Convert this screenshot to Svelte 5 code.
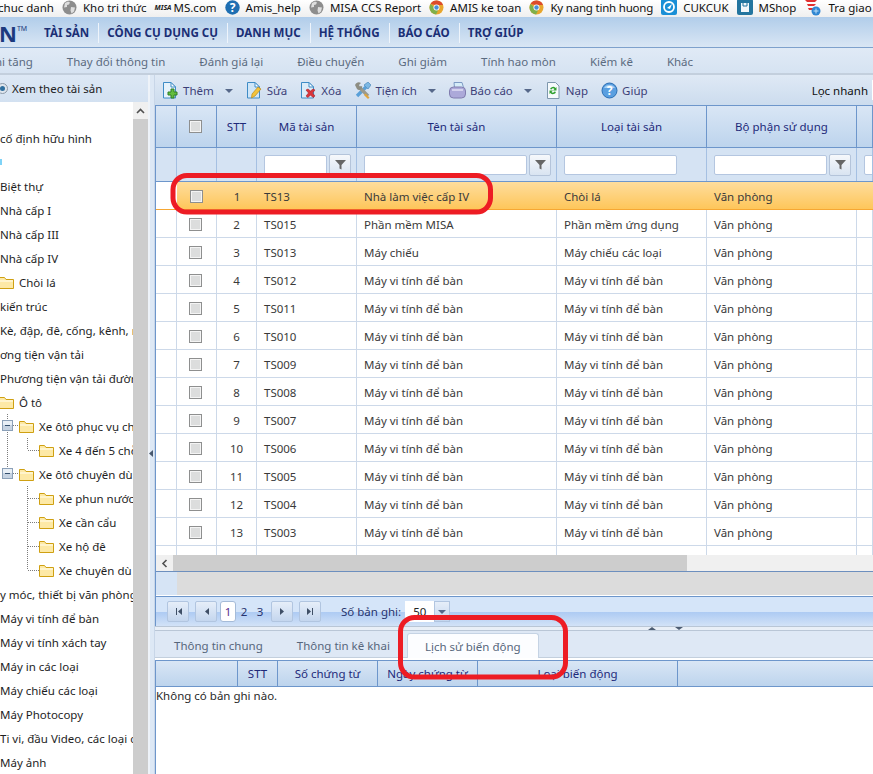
<script>
	const bookmarks = [
		{ icon: null, text: 'chuc danh' },
		{ icon: 'globe', text: 'Kho tri thức' },
		{ icon: 'misa', text: 'MS.com' },
		{ icon: 'help', text: 'Amis_help' },
		{ icon: 'globe', text: 'MISA CCS Report' },
		{ icon: 'chrome', text: 'AMIS ke toan' },
		{ icon: 'chrome', text: 'Ky nang tinh huong', tight: true },
		{ icon: 'cuk', text: 'CUKCUK' },
		{ icon: 'shop', text: 'MShop' },
		{ icon: 'tra', text: 'Tra giao d' }
	];

	const menus = ['TÀI SẢN', 'CÔNG CỤ DỤNG CỤ', 'DANH MỤC', 'HỆ THỐNG', 'BÁO CÁO', 'TRỢ GIÚP'];
	const subMenus = ['hi tăng', 'Thay đổi thông tin', 'Đánh giá lại', 'Điều chuyển', 'Ghi giảm', 'Tính hao mòn', 'Kiểm kê', 'Khác'];

	const tools = [
		{ icon: 'add', text: 'Thêm', arrow: true },
		{ icon: 'edit', text: 'Sửa' },
		{ icon: 'del', text: 'Xóa' },
		{ icon: 'tool', text: 'Tiện ích', arrow: true },
		{ icon: 'print', text: 'Báo cáo', arrow: true },
		{ icon: 'load', text: 'Nạp' },
		{ icon: 'ask', text: 'Giúp' }
	];

	// lead: the dotted connectors in front of a tree row
	const tree = [
		{ text: 'cố định hữu hình' },
		{ text: '', mark: true },
		{ text: 'Biệt thự' },
		{ text: 'Nhà cấp I' },
		{ text: 'Nhà cấp III' },
		{ text: 'Nhà cấp IV' },
		{ text: 'Chòi lá', folder: true },
		{ text: 'kiến trúc' },
		{ text: 'Kè, đập, đê, cống, kênh, r' },
		{ text: 'ơng tiện vận tải' },
		{ text: 'Phương tiện vận tải đườn' },
		{ text: 'Ô tô', folder: true },
		{ text: 'Xe ôtô phục vụ ch', folder: true, lead: 'open' },
		{ text: 'Xe 4 đến 5 chỗ', folder: true, lead: 'onlyChild' },
		{ text: 'Xe ôtô chuyên dù', folder: true, lead: 'openLast' },
		{ text: 'Xe phun nước', folder: true, lead: 'child' },
		{ text: 'Xe cần cẩu', folder: true, lead: 'child' },
		{ text: 'Xe hộ đê', folder: true, lead: 'child' },
		{ text: 'Xe chuyên dù', folder: true, lead: 'lastChild' },
		{ text: 'y móc, thiết bị văn phòng' },
		{ text: 'Máy vi tính để bàn' },
		{ text: 'Máy vi tính xách tay' },
		{ text: 'Máy in các loại' },
		{ text: 'Máy chiếu các loại' },
		{ text: 'Máy Photocopy' },
		{ text: 'Ti vi, đầu Video, các loại c' },
		{ text: 'Máy ảnh' }
	];

	const pc = 'Máy vi tính để bàn';
	const rows = [
		['1', 'TS13', 'Nhà làm việc cấp IV', 'Chòi lá'],
		['2', 'TS015', 'Phần mềm MISA', 'Phần mềm ứng dụng'],
		['3', 'TS013', 'Máy chiếu', 'Máy chiếu các loại'],
		['4', 'TS012', pc, pc],
		['5', 'TS011', pc, pc],
		['6', 'TS010', pc, pc],
		['7', 'TS009', pc, pc],
		['8', 'TS008', pc, pc],
		['9', 'TS007', pc, pc],
		['10', 'TS006', pc, pc],
		['11', 'TS005', pc, pc],
		['12', 'TS004', pc, pc],
		['13', 'TS003', pc, pc],
		['', '', '', '']
	];
</script>

{#snippet folder()}
	<svg class="folder" width="15" height="13" viewBox="0 0 15 13">
		<path d="M.5 12.500v-11h5l1.500 2h7.500v9z" fill="#fde9a6" stroke="#cfa012" />
		<path d="M1 4h13v2H1z" fill="#fff4cc" />
	</svg>
{/snippet}

{#snippet box()}
	<rect x="2.500" y="6.500" width="10" height="10" fill="#c6d3e2" stroke="#8ba0b8" />
	<rect x="3" y="7" width="9" height="4" fill="#e8eff6" />
	<path d="M5 11.500h5" stroke="#34506e" />
{/snippet}

{#snippet lead(kind)}
	{#if kind === 'open' || kind === 'openLast'}
		<svg class="lead" width="19" height="24" viewBox="0 0 19 24" shape-rendering="crispEdges">
			<path d={kind === 'open' ? 'M7.500 0v24' : 'M7.500 0v7'} class="dots" />
			<path d="M13 11.500h6" class="dots" />
			{@render box()}
		</svg>
	{:else}
		<svg class="lead" width="39" height="24" viewBox="0 0 39 24" shape-rendering="crispEdges">
			{#if kind === 'onlyChild'}<path d="M7.500 0v24" class="dots" />{/if}
			<path d={kind === 'child' ? 'M27.500 0v24' : 'M27.500 0v12'} class="dots" />
			<path d="M28 12.500h11" class="dots" />
		</svg>
	{/if}
{/snippet}

{#snippet markIcon(name)}
	{#if name === 'globe'}
		<svg width="15" height="15" viewBox="0 0 15 15">
			<circle cx="7.500" cy="7.500" r="7" fill="#8d8d8d" />
			<path d="M3 3l3-1.500 2 1-1 2-2 .5v2l-3 .5zM9 7l4 .5-1 4-2.500 2-1-3z" fill="#dedede" />
		</svg>
	{:else if name === 'misa'}
		<span class="misa">MISA</span>
	{:else if name === 'help'}
		<svg width="15" height="15" viewBox="0 0 15 15">
			<circle cx="7.500" cy="7.500" r="7.200" fill="#1f6fb2" />
			<text x="7.500" y="11.500" class="q">?</text>
		</svg>
	{:else if name === 'chrome'}
		<svg width="15" height="15" viewBox="0 0 15 15">
			<circle cx="7.500" cy="7.500" r="7" fill="#e8a62c" />
			<path d="M1.500 4A7 7 0 0 1 14 5H7z" fill="#dc4b2c" />
			<path d="M1.500 4A7 7 0 0 0 7 14.500l2-4z" fill="#7fb04a" />
			<circle cx="7.500" cy="7.500" r="3" fill="#fff" />
			<circle cx="7.500" cy="7.500" r="2.200" fill="#4a8fd8" />
		</svg>
	{:else if name === 'cuk'}
		<svg width="16" height="16" viewBox="0 0 16 16">
			<rect width="16" height="16" rx="2" fill="#1a8fd6" />
			<circle cx="8" cy="8" r="5" fill="none" stroke="#fff" stroke-width="1.800" />
			<path d="M6 9l5-4-2 5z" fill="#fff" />
		</svg>
	{:else if name === 'shop'}
		<svg width="16" height="16" viewBox="0 0 16 16">
			<rect width="16" height="16" rx="2" fill="#23759f" />
			<path d="M4 4h8v9H4z" fill="#f2f7fa" />
			<path d="M6 4v3h4V4" fill="none" stroke="#23759f" />
		</svg>
	{:else}
		<svg width="18" height="17" viewBox="0 0 18 17">
			<path d="M1 1h12l-2 2H3zM3 5h9l-2 2H4zM4 9h6l-1 2H5z" fill="#e03030" />
			<circle cx="12" cy="12" r="4.500" fill="#2f86d2" />
			<path d="M9.500 12h5M12 9.500v5" stroke="#bfe0f8" />
		</svg>
	{/if}
{/snippet}

{#snippet doc(fill)}
	<path d="M1.500 .5h7.500l4.500 4.500v11h-12z" fill={fill} stroke="#3f8cc6" />
	<path d="M9 .5v4.500h4.500z" fill="#fff" stroke="#3f8cc6" />
{/snippet}

{#snippet toolIcon(name)}
	<svg class="tool-icon" width="17" height="17" viewBox="0 0 17 17">
		{#if name === 'add'}
			{@render doc('#e6f2fb')}
			<path d="M9 7h3v3h3v3h-3v3H9v-3H6v-3h3z" fill="#63bd3e" stroke="#2f7f26" />
		{:else if name === 'edit'}
			{@render doc('#cfe6f8')}
			<path d="M12 5l3 2-6 7-3.500 2L6 12z" fill="#f2c33c" stroke="#b98a1c" stroke-width=".7" />
		{:else if name === 'del'}
			{@render doc('#dcecf8')}
			<path d="M6 8l2-1 2.500 2 2.500-2 2 1-2.500 3 2.500 3-2 1.500-2.500-2.500-2.500 2.500-2-1.500 2.500-3z" fill="#d9343a" stroke="#a82228" stroke-width=".6" />
		{:else if name === 'tool'}
			<path d="M3 14L12 5" stroke="#5aa0d8" stroke-width="3.400" />
			<path d="M10 3l4-3 3 3-3 4z" fill="#7cb8e4" stroke="#3f7fb4" stroke-width=".6" />
			<path d="M14 14L5 5" stroke="#9a9a8e" stroke-width="3.400" />
			<path d="M1 3a4 4 0 0 1 6-2L5 3l1 2 2-1a3 3 0 0 1-5 3z" fill="#8d8d82" />
			<path d="M11.500 11.500l4 4-1.500 1.500-4-4z" fill="#e0a53c" />
		{:else if name === 'print'}
			<path d="M5 .5h8l1.500 5h-9z" fill="#d5ecf8" stroke="#7d9ac4" />
			<rect x=".5" y="5" width="16" height="11" rx="4" fill="#aca9d9" stroke="#807dae" />
			<path d="M3 8h11" stroke="#d4d2ee" stroke-width="2" />
		{:else if name === 'load'}
			<path d="M2.500 .5h8l3.500 3.500v12.500h-11.500z" fill="#f6fafc" stroke="#7e97ad" />
			<path d="M5 7a3.200 3.200 0 0 1 5.500-1l1-1v3.500H8L9.500 7A2 2 0 0 0 6.500 7.500z" fill="#2fa02f" />
			<path d="M11 10a3.200 3.200 0 0 1-5.500 1l-1 1V8.500H8L6.500 10a2 2 0 0 0 3-.5z" fill="#2fa02f" />
		{:else}
			<circle cx="8.500" cy="8.500" r="7.500" fill="#5a9fe0" stroke="#2a6eb4" />
			<path d="M3 6a6 5 0 0 1 11 0z" fill="#a8d0f4" />
			<text x="8.500" y="12.500" class="q">?</text>
		{/if}
	</svg>
{/snippet}

{#snippet check()}
	<span class="check"></span>
{/snippet}

{#snippet filter(w, withBtn)}
	<div class="filter-cell">
		<span class="filter-input" style="width: {w}px"></span>
		{#if withBtn}
			<span class="filter-btn">
				<svg width="11" height="11" viewBox="0 0 11 11"><path d="M0 1h11L6.500 6v4.500l-2-1V6z" fill="#666" /></svg>
			</span>
		{/if}
	</div>
{/snippet}

{#snippet pagerBtn(path)}
	<span class="pager-btn">
		<svg width="9" height="9" viewBox="0 0 9 9"><path d={path} fill="#3f4f66" /></svg>
	</span>
{/snippet}

<div class="page">
	<div class="bookmarks">
		{#each bookmarks as b}
			<span class="bookmark" class:tight={b.tight}>
				{#if b.icon}{@render markIcon(b.icon)}{/if}
				<span>{b.text}</span>
			</span>
		{/each}
	</div>

	<div class="menu">
		<span class="logo">N<sup>TM</sup></span>
		{#each menus as m, i}
			<span class="menu-item" class:last={i === menus.length - 1}>{m}</span>
		{/each}
	</div>

	<div class="submenu">
		{#each subMenus as s}
			<span>{s}</span>
		{/each}
	</div>

	<div class="body">
		<aside class="left">
			<div class="left-head">
				<span class="radio"></span>
				<span>Xem theo tài sản</span>
			</div>
			<div class="left-main">
				<div class="tree">
					{#each tree as t}
						<div class="tree-row">
							{#if t.mark}<span class="mark"></span>{/if}
							{#if t.lead}{@render lead(t.lead)}{/if}
							{#if t.folder}{@render folder()}{/if}
							<span>{t.text}</span>
						</div>
					{/each}
				</div>
				<div class="vscroll">
					<span class="vscroll-btn">
						<svg width="9" height="6" viewBox="0 0 9 6"><path d="M1 5l3.500-3.500L8 5" fill="none" stroke="#505050" stroke-width="1.600" /></svg>
					</span>
				</div>
			</div>
		</aside>

		<div class="splitter">
			<svg width="4" height="7" viewBox="0 0 4 7"><path d="M4 0v7L0 3.500z" fill="#48586e" /></svg>
		</div>

		<main class="right">
			<div class="toolbar">
				{#each tools as t}
					<span class="tool">
						{@render toolIcon(t.icon)}
						<span>{t.text}</span>
						{#if t.arrow}<span class="caret"></span>{/if}
					</span>
				{/each}
				<span class="quick">Lọc nhanh</span>
				<span class="quick-input"></span>
			</div>

			<div class="grid">
				<div class="cols head">
					<span></span>
					<span class="c">{@render check()}</span>
					<span class="c">STT</span>
					<span class="c">Mã tài sản</span>
					<span class="c">Tên tài sản</span>
					<span class="c">Loại tài sản</span>
					<span class="c">Bộ phận sử dụng</span>
					<span></span>
				</div>
				<div class="cols filters">
					<span></span>
					<span></span>
					<span></span>
					{@render filter(63, true)}
					{@render filter(163, true)}
					{@render filter(113, false)}
					{@render filter(113, true)}
					{@render filter(40, false)}
				</div>
				<div class="rows">
					{#each rows as r, i}
						<div class="cols row" class:selected={i === 0}>
							<span class="gutter"></span>
							<span class="c">{#if r[0]}{@render check()}{/if}</span>
							<span class="c">{r[0]}</span>
							<span class="t">{r[1]}</span>
							<span class="t">{r[2]}</span>
							<span class="t">{r[3]}</span>
							<span class="t">{r[0] ? 'Văn phòng' : ''}</span>
							<span class="t"></span>
						</div>
					{/each}
				</div>
				<div class="hscroll">
					<span class="hscroll-btn">
						<svg width="7" height="9" viewBox="0 0 7 9"><path d="M5.500 1L2 4.500 5.500 8" fill="none" stroke="#505050" stroke-width="1.600" /></svg>
					</span>
					<span class="hscroll-thumb"></span>
				</div>
				<div class="summary"><span></span></div>
			</div>

			<div class="pager">
				{@render pagerBtn('M2 1h1v7H2zM8 1v7L4 4.500z')}
				{@render pagerBtn('M7 1v7L3 4.500z')}
				<span class="page-no current">1</span>
				<span class="page-no">2</span>
				<span class="page-no last-no">3</span>
				{@render pagerBtn('M2 1v7l4-3.500z')}
				{@render pagerBtn('M1 1v7l4-3.500zM6 1h1v7H6z')}
				<span class="page-size">Số bản ghi:</span>
				<span class="combo">
					<span class="combo-value">50</span>
					<span class="combo-btn"><span class="caret"></span></span>
				</span>
			</div>

			<div class="hsplit">
				<span class="up"></span>
				<span class="down"></span>
			</div>

			<div class="tabs">
				<span class="tab">Thông tin chung</span>
				<span class="tab">Thông tin kê khai</span>
				<span class="tab active">Lịch sử biến động</span>
			</div>

			<div class="detail">
				<div class="detail-head">
					<span></span>
					<span>STT</span>
					<span>Số chứng từ</span>
					<span>Ngày chứng từ</span>
					<span>Loại biến động</span>
					<span></span>
				</div>
				<div class="empty">Không có bản ghi nào.</div>
			</div>
		</main>
	</div>

	<!-- red marks drawn over the screenshot -->
	<svg class="marks" width="873" height="774" viewBox="0 0 873 774">
		<rect x="173" y="175.500" width="317.500" height="36.500" rx="14" />
		<rect x="400.500" y="617.500" width="165" height="59.500" rx="14" />
	</svg>
</div>

<style>
	:global(body) {
		margin: 0;
		background: #fff;
	}

	.page {
		position: relative;
		display: flex;
		flex-direction: column;
		width: 873px;
		height: 774px;
		overflow: hidden;
		font-family: 'Noto Sans', 'Open Sans', sans-serif;
		font-size: 11.5px;
		color: #222;
	}

	/* Bookmarks bar */
	.bookmarks {
		flex: 0 0 17px;
		box-sizing: border-box;
		display: flex;
		align-items: center;
		gap: 8px;
		padding-bottom: 3px;
		margin-left: -2px;
		background: linear-gradient(#ffffff, #efefef);
		color: #111;
		white-space: nowrap;
		overflow: hidden;
	}

	.bookmark {
		display: flex;
		align-items: center;
		gap: 6px;
		flex: none;
	}

	.bookmark.tight {
		letter-spacing: -0.2px;
	}

	.misa {
		font-size: 7px;
		font-weight: 700;
		font-style: italic;
		color: #222;
		width: 17px;
		margin-right: -4px;
	}

	.q {
		font-size: 12px;
		font-weight: 700;
		fill: #fff;
		text-anchor: middle;
	}

	/* Main menu */
	.menu {
		flex: 0 0 31px;
		box-sizing: border-box;
		display: flex;
		align-items: center;
		padding-top: 2px;
		background: linear-gradient(#b1cdea, #d9e6f4);
		border-bottom: 1px solid #7ea1cc;
		color: #1b2f75;
		font-weight: 700;
		font-size: 11.6px;
		white-space: nowrap;
	}

	.logo {
		width: 45px;
		margin-left: -1px;
		font-size: 22px;
		line-height: 1;
		color: #1c3a7e;
	}

	.logo sup {
		font-size: 7px;
		font-weight: 400;
		vertical-align: 11px;
		line-height: 0;
	}

	.menu-item {
		padding-right: 9px;
		margin-right: 8px;
		height: 20px;
		line-height: 20px;
		border-right: 1px solid #eef4fb;
	}

	.menu-item.last {
		border-right: none;
	}

	.submenu {
		flex: 0 0 27px;
		box-sizing: border-box;
		display: flex;
		align-items: center;
		gap: 34px;
		padding-top: 2px;
		background: linear-gradient(#e0eaf6, #d6e3f2);
		border-bottom: 2px solid #c3cfdd;
		color: #5b6b80;
		white-space: nowrap;
	}

	.submenu span:first-child {
		margin-left: -5px;
	}

	.body {
		flex: 1;
		display: flex;
		min-height: 0;
	}

	/* Left tree panel */
	.left {
		flex: 0 0 148px;
		display: flex;
		flex-direction: column;
	}

	.left-head {
		flex: 0 0 27px;
		box-sizing: border-box;
		display: flex;
		align-items: center;
		gap: 4px;
		padding-bottom: 1px;
		margin-left: -3px;
		background: linear-gradient(#dde8f5, #d3e1f1);
	}

	.radio {
		box-sizing: border-box;
		width: 11px;
		height: 11px;
		border-radius: 50%;
		border: 3px solid #dfe6ee;
		outline: 1px solid #8a98a8;
		outline-offset: -1px;
		background: #2f6f9f;
	}

	.left-main {
		flex: 1;
		display: flex;
		min-height: 0;
	}

	.tree {
		flex: 0 0 133px;
		padding-top: 24px;
		overflow: hidden;
		background: #fff;
	}

	.tree-row {
		display: flex;
		align-items: center;
		height: 24px;
		white-space: nowrap;
		color: #1e1e1e;
	}

	.folder {
		flex: none;
		margin-right: 5px;
	}

	.tree-row > .folder:first-child {
		margin-left: -1px;
	}

	.lead {
		flex: none;
	}

	.dots {
		fill: none;
		stroke: #7c7c7c;
		stroke-dasharray: 1 1;
	}

	.mark {
		width: 2px;
		height: 6px;
		background: #7fd3f7;
	}

	.vscroll {
		flex: 0 0 15px;
		background: #cdcdcd;
	}

	.vscroll-btn {
		display: flex;
		align-items: center;
		justify-content: center;
		height: 17px;
		background: #f0f0f0;
	}

	.splitter {
		flex: 0 0 7px;
		box-sizing: border-box;
		display: flex;
		align-items: center;
		justify-content: center;
		background: #dde8f5;
		border-left: 2px solid #eef3f9;
		border-right: 1px solid #c8d6e8;
	}

	.splitter svg {
		margin-top: 58px;
		margin-left: -3px;
	}

	.right {
		flex: 1;
		min-width: 0;
		display: flex;
		flex-direction: column;
	}

	/* Toolbar */
	.toolbar {
		flex: 0 0 30px;
		display: flex;
		align-items: center;
		padding-left: 7px;
		background: linear-gradient(#dfe9f5, #ccdcee);
		color: #3c3f78;
		white-space: nowrap;
	}

	.tool {
		display: flex;
		align-items: center;
		gap: 4px;
		margin-right: 13px;
		padding-top: 1px;
	}

	.tool-icon {
		flex: none;
		margin-top: -1px;
	}

	.caret {
		width: 0;
		height: 0;
		margin-left: 7px;
		border: 4px solid transparent;
		border-top: 4px solid #56688a;
		border-bottom: none;
	}

	.quick {
		margin-left: auto;
		margin-right: 4px;
		padding-top: 1px;
		color: #111;
	}

	.quick-input {
		width: 1px;
		height: 20px;
		background: #fff;
	}

	/* Asset grid */
	.grid {
		flex: none;
		border-left: 1px solid #6d96cb;
		border-top: 1px solid #6d96cb;
	}

	.cols {
		display: grid;
		grid-template-columns: 21px 40px 40px 100px 200px 150px 150px 1fr;
	}

	.head {
		height: 42px;
		box-sizing: border-box;
		border-bottom: 1px solid #6d96cb;
		background: linear-gradient(#d9e6f5, #bdd4ed);
		color: #1e2a7a;
	}

	.head > span {
		border-right: 1px solid #6d96cb;
	}

	.c {
		display: flex;
		align-items: center;
		justify-content: center;
	}

	.check {
		box-sizing: border-box;
		width: 13px;
		height: 13px;
		margin-right: 2px;
		border: 1px solid #8e8f8f;
		outline: 1px solid #f4f4f4;
		outline-offset: -2px;
		background: #dcdddd;
	}

	.filters {
		height: 34px;
		box-sizing: border-box;
		border-bottom: 1px solid #6d96cb;
		background: #d5e3f3;
	}

	.filters > span {
		border-right: 1px solid #a5c0e2;
	}

	.filter-cell {
		display: flex;
		align-items: center;
		gap: 2px;
		padding-left: 7px;
		border-right: 1px solid #a5c0e2;
		overflow: hidden;
	}

	.filter-input {
		box-sizing: border-box;
		height: 20px;
		flex: none;
		background: #fff;
		border: 1px solid #b4c6e0;
		border-radius: 2px;
	}

	.filter-btn {
		box-sizing: border-box;
		flex: none;
		display: flex;
		align-items: center;
		justify-content: center;
		width: 22px;
		height: 22px;
		background: linear-gradient(#f6f8fb, #d9e4f1);
		border: 1px solid #b4c4da;
		border-radius: 2px;
	}

	.rows {
		height: 373px;
		overflow: hidden;
		background: #fff;
	}

	.row {
		height: 28px;
		box-sizing: border-box;
		border-bottom: 1px solid #cdd9e9;
		color: #3a3a3a;
	}

	.row > span {
		border-right: 1px solid #cdd9e9;
	}

	.t {
		display: flex;
		align-items: center;
		padding: 1px 0 0 7px;
		white-space: nowrap;
	}

	.row .c {
		padding-top: 1px;
	}

	.row.selected {
		background: linear-gradient(#fedd9d, #fec65a);
		border-bottom: 1px solid #f6a733;
	}

	.row.selected > span {
		border-right: none;
	}

	.row.selected .gutter {
		background: #fff;
	}

	.hscroll {
		display: flex;
		height: 17px;
		box-sizing: border-box;
		background: #f0f0f0;
		border-bottom: 1px solid #6d8fbe;
	}

	.hscroll-btn {
		display: flex;
		align-items: center;
		justify-content: center;
		width: 17px;
	}

	.hscroll-thumb {
		width: 514px;
		background: #cdcdcd;
	}

	.summary {
		height: 24px;
		box-sizing: border-box;
		background: #dcdcdc;
		border-bottom: 1px solid #fff;
	}

	.summary span {
		display: block;
		width: 21px;
		height: 100%;
		background: #d6e4f5;
	}

	/* Pager */
	.pager {
		flex: 0 0 30px;
		box-sizing: border-box;
		display: flex;
		align-items: center;
		padding: 0 0 0 11px;
		background: linear-gradient(#d5e5f9 0 53%, #aecbf3 53%, #d2e2f7);
		border-top: 1px solid #6d96cb;
		border-left: 1px solid #6d96cb;
		color: #27346e;
	}

	.pager-btn {
		box-sizing: border-box;
		display: flex;
		align-items: center;
		justify-content: center;
		width: 22px;
		height: 21px;
		margin-right: 6px;
		background: linear-gradient(#e6eef9, #c4d6ee);
		border: 1px solid #b1c5e0;
		border-radius: 2px;
	}

	.page-no {
		width: 16px;
		height: 21px;
		line-height: 21px;
		text-align: center;
	}

	.page-no.current {
		box-sizing: border-box;
		line-height: 19px;
		margin-left: -3px;
		background: #fff;
		border: 1px solid #a5bbd8;
		border-radius: 3px;
		color: #5a2a8c;
	}

	.last-no {
		margin-right: 3px;
	}

	.page-size {
		margin-left: 14px;
		margin-right: 4px;
	}

	.combo {
		display: flex;
		height: 21px;
	}

	.combo-value {
		box-sizing: border-box;
		width: 29px;
		padding-left: 8px;
		background: #fff;
		line-height: 21px;
		color: #222;
	}

	.combo-btn {
		display: flex;
		align-items: center;
		justify-content: center;
		width: 16px;
		background: linear-gradient(#e6eef9, #c4d6ee);
		border: 1px solid #b1c5e0;
		box-sizing: border-box;
	}

	.combo-btn .caret {
		margin-left: 0;
	}

	.hsplit {
		flex: 0 0 5px;
		box-sizing: border-box;
		display: flex;
		align-items: center;
		gap: 19px;
		padding-left: 493px;
		background: #e9eff7;
		border-top: 1px solid #b9c6d6;
		border-bottom: 1px solid #b9c6d6;
	}

	.up,
	.down {
		width: 0;
		height: 0;
		border-left: 4px solid transparent;
		border-right: 4px solid transparent;
	}

	.up {
		border-bottom: 3px solid #4c5c72;
	}

	.down {
		border-top: 3px solid #4c5c72;
	}

	/* Tabs */
	.tabs {
		flex: 0 0 27px;
		box-sizing: border-box;
		display: flex;
		align-items: flex-end;
		padding-left: 2px;
		background: #dee8f5;
		border-bottom: 1px solid #c3cfdd;
		color: #56667c;
	}

	.tab {
		height: 24px;
		line-height: 25px;
		padding: 0 17px;
		white-space: nowrap;
	}

	.tab.active {
		height: 25px;
		margin-bottom: -1px;
		background: #fcfdff;
		border: 1px solid #c5d3e4;
		border-bottom: none;
		border-radius: 3px 3px 0 0;
		box-sizing: border-box;
	}

	.detail {
		flex: 1;
		margin-top: 2px;
		background: #fff;
		border-left: 1px solid #6d96cb;
	}

	.detail-head {
		display: grid;
		grid-template-columns: 82px 40px 100px 100px 200px 1fr;
		height: 27px;
		box-sizing: border-box;
		background: linear-gradient(#d9e6f5, #bdd4ed);
		border-top: 1px solid #6d96cb;
		border-bottom: 1px solid #6d96cb;
		color: #1e2a7a;
	}

	.detail-head span {
		display: flex;
		align-items: center;
		justify-content: center;
		border-right: 1px solid #6d96cb;
	}

	.detail-head span:last-child {
		border-right: none;
	}

	.empty {
		line-height: 18px;
		color: #2a2a2a;
		white-space: nowrap;
	}

	.marks {
		position: absolute;
		left: 0;
		top: 0;
		pointer-events: none;
	}

	.marks rect {
		fill: none;
		stroke: #ed1c24;
		stroke-width: 5;
	}
</style>
